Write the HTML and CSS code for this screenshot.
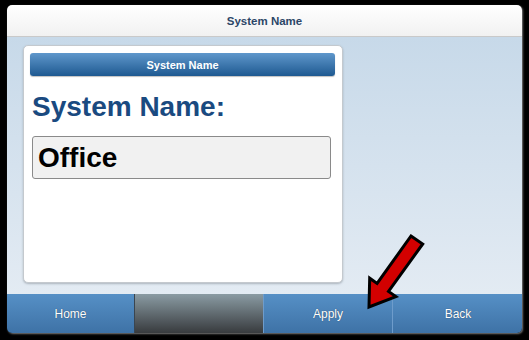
FILE: index.html
```html
<!DOCTYPE html>
<html>
<head>
<meta charset="utf-8">
<link rel="stylesheet" href="styles.css">
</head>
<body>
<div class="screen">
  <div class="topbar">System Name</div>
  <div class="main">
    <div class="card">
      <div class="card-head">System Name</div>
      <div class="label">System Name:</div>
      <div class="field">Office</div>
    </div>
  </div>
  <div class="footer">
    <div class="btn">Home</div>
    <div class="btn dark"></div>
    <div class="btn">Apply</div>
    <div class="btn">Back</div>
  </div>
</div>
<svg class="arrow" width="529" height="340" viewBox="0 0 529 340">
  <polygon points="411,236 422.7,244 388.5,291.4 395.9,296.6 369,307 369.7,278.2 377.1,283.4" fill="#d30000" stroke="#000" stroke-width="3" stroke-linejoin="miter"/>
</svg>
</body>
</html>
```
FILE: styles.css
```css
html, body {
  margin: 0;
  padding: 0;
  background: #000;
  width: 529px;
  height: 340px;
  overflow: hidden;
  font-family: "Liberation Sans", Arial, sans-serif;
}
.screen {
  width: 515px;
  height: 328px;
  margin: 5px 0 0 7px;
  border-radius: 5px;
  overflow: hidden;
  display: flex;
  flex-direction: column;
  box-shadow: 1px 1px 2px rgba(150,150,150,0.8);
}
.topbar {
  height: 31px;
  flex: none;
  background: linear-gradient(#ffffff, #f1f1f1);
  border-bottom: 1px solid #c9c9c9;
  display: flex;
  align-items: center;
  justify-content: center;
  font-weight: bold;
  font-size: 11.5px;
  color: #2c4667;
}
.main {
  flex: 1;
  min-height: 0;
  background: linear-gradient(#c7d9e9, #e3ebf3);
  padding: 8px 16px 0;
}
.card {
  width: 320px;
  height: 238px;
  box-sizing: border-box;
  background: #fff;
  border: 1px solid #c4c9ce;
  border-radius: 5px;
  box-shadow: 0 1px 2px rgba(120,130,140,0.5);
  padding: 7px 7px 0 6px;
}
.card-head {
  height: 23px;
  border-radius: 3px;
  background: linear-gradient(#5f97cb, #1e5991);
  color: #fff;
  font-weight: bold;
  font-size: 11px;
  display: flex;
  align-items: center;
  justify-content: center;
  box-shadow: 0 1px 1px rgba(0,0,0,0.25);
}
.label {
  margin: 15px 0 0 2px;
  font-weight: bold;
  font-size: 28px;
  line-height: 32px;
  color: #1a4a80;
}
.field {
  margin: 13px 4px 0 2px;
  height: 41px;
  background: #f1f1f1;
  border: 1px solid #8a8a8a;
  border-radius: 3px;
  font-weight: bold;
  font-size: 28px;
  color: #000;
  display: flex;
  align-items: center;
  padding-left: 5px;
}
.footer {
  height: 39px;
  flex: none;
  display: flex;
}
.btn {
  flex: none;
  width: 128px;
  background: linear-gradient(#5690c6, #3e72a6);
  color: #fff;
  font-size: 12px;
  display: flex;
  align-items: center;
  justify-content: center;
  text-shadow: 0 0 1px rgba(0,0,0,0.5);
  border-left: 1px solid #6e9ccb;
}
.btn:first-child {
  width: 127px;
  border-left: none;
}
.btn:last-child {
  width: 130px;
}
.btn.dark {
  background: linear-gradient(#8a9ba3, #383b3e);
  border-left: 1px solid #3a4550;
}
.arrow {
  position: absolute;
  left: 0;
  top: 0;
  pointer-events: none;
}
```
